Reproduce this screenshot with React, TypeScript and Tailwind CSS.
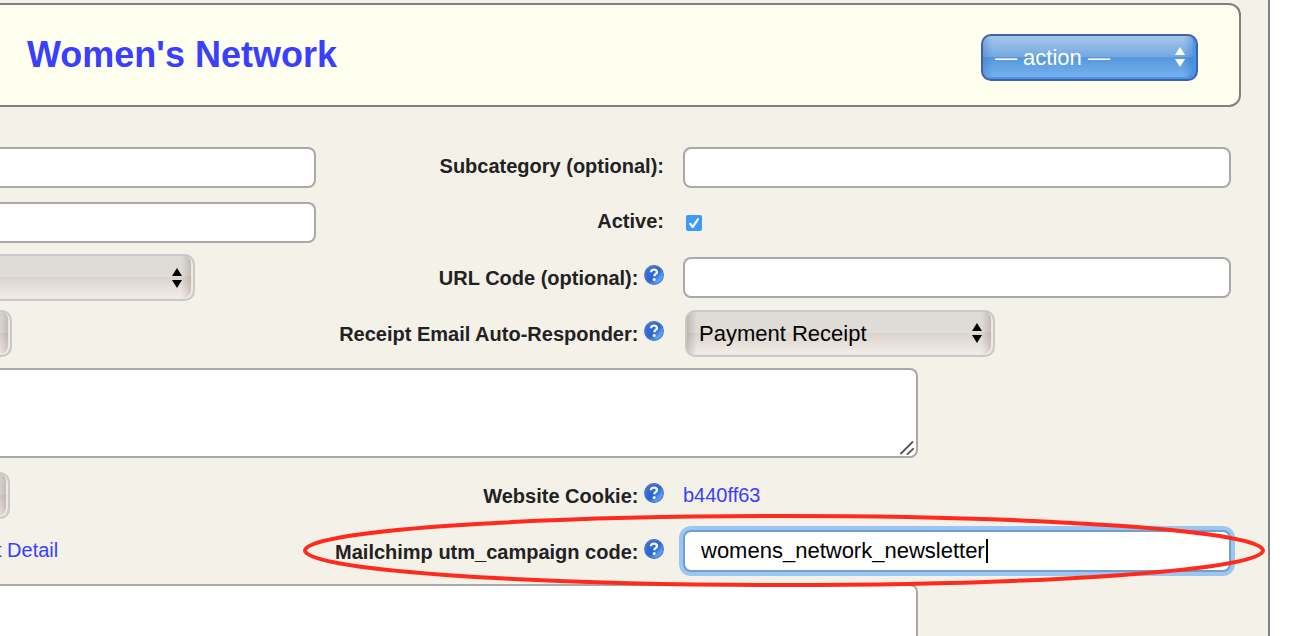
import { ReactNode } from 'react'
import clsx from 'clsx'

function HelpIcon() {
    return (
        <svg className="inline size-5 align-baseline" viewBox="0 0 20 20" role="img" aria-label="Help">
            <defs>
                <linearGradient id="help-fill" x1="0.1" y1="0.2" x2="0.9" y2="0.9">
                    <stop offset="0" stopColor="#3f70d4" />
                    <stop offset="0.5" stopColor="#2a62d2" />
                    <stop offset="1" stopColor="#74bcfb" />
                </linearGradient>
            </defs>
            <circle cx="10" cy="10" r="9.9" fill="#3163bd" />
            <circle cx="10" cy="10" r="9" fill="url(#help-fill)" stroke="#5c8ddd" strokeWidth="0.6" />
            <path d="M7 7.2C7.1 5.4 8.4 4.6 10 4.6c1.8 0 3 .8 3 2.3 0 2-2.7 2-2.7 4.4" fill="none" stroke="#f4f8ff" strokeWidth="2.4" />
            <circle cx="10.2" cy="14.4" r="1.5" fill="#f4f8ff" />
        </svg>
    )
}

function Arrows({ className }: { className?: string }) {
    return (
        <svg className={clsx('pointer-events-none absolute top-1/2 right-[13px] h-5 w-[10px] -translate-y-1/2', className)} viewBox="0 0 10 20" fill="currentColor" aria-hidden="true">
            <path d="M5 0 10 8H0zM5 20 10 12H0z" />
        </svg>
    )
}

const inputClass = 'block h-[41px] w-full border-2 border-[#a9a9a9] bg-white px-4 text-[22px] text-black outline-none'

const selectClass = 'block h-[47px] w-full appearance-none border-2 border-[#c9c9c9] text-[22px] text-black outline-none shadow-[inset_-2px_-1px_0_#f1e6e0]'

const bevelBoth =
    'bg-[linear-gradient(to_right,rgba(90,75,70,0.24),rgba(90,75,70,0)_10px,rgba(90,75,70,0)_calc(100%-12px),rgba(90,75,70,0.26)),linear-gradient(to_bottom,#dedbd6,#e0dcd7_49%,#dbd3ce_50%,#f3eee9)]'

const bevelRight =
    'bg-[linear-gradient(to_right,rgba(90,75,70,0)_calc(100%-12px),rgba(90,75,70,0.26)),linear-gradient(to_bottom,#dedbd6,#e0dcd7_49%,#dbd3ce_50%,#f3eee9)]'

function Row({ left, label, htmlFor, help, children, className }: { left?: ReactNode; label: string; htmlFor?: string; help?: boolean; children: ReactNode; className?: string }) {
    return (
        <div className={clsx('relative grid grid-cols-[316px_348px_1fr] items-center', className)}>
            <div>{left}</div>
            <div className={clsx('text-right text-xl leading-6 font-bold whitespace-nowrap text-[#222]', !help && 'pb-[3px]')}>
                {htmlFor ? <label htmlFor={htmlFor}>{label}</label> : <span>{label}</span>}
                {help && <> <HelpIcon /></>}
            </div>
            <div className="pr-[37px] pl-[19px]">{children}</div>
        </div>
    )
}

export default function App() {
    return (
        <div className="h-screen overflow-hidden bg-white font-['Liberation_Sans',Arial,sans-serif]">
            <main className="mr-[34px] h-full overflow-hidden border-r-2 border-[#808080] bg-[#f4f1e9] pt-[3px]">
                <header className="mr-[27px] flex h-[104px] items-center justify-between rounded-r-xl border-2 border-l-0 border-[#808080] bg-[#fffff0] pt-1 pr-[41px] pl-[27px]">
                    <h1 className="pb-1 text-4xl font-bold text-[#3a3fff]">Women's Network</h1>
                    <div className="relative w-[217px]">
                        <select
                            aria-label="Action"
                            className="block h-[47px] w-full appearance-none rounded-[10px] border-2 border-[#4660a4] bg-[linear-gradient(to_right,rgba(40,110,190,0.3),rgba(40,110,190,0)_10px,rgba(40,110,190,0)_calc(100%-13px),rgba(40,110,190,0.45)),linear-gradient(to_bottom,#a8c8ea,#72a8e0_49%,#5598de_50%,#7ab2ee)] px-3 text-[22px] text-white shadow-[inset_-3px_-2px_0_#4495ee] outline-none"
                        >
                            <option>— action —</option>
                        </select>
                        <Arrows className="text-white" />
                    </div>
                </header>

                <form className="pt-[33px]">
                    <Row className="h-[55px]" label="Subcategory (optional):" htmlFor="subcategory" left={<input aria-label="Name" className={clsx(inputClass, 'rounded-r-lg border-l-0')} />}>
                        <input id="subcategory" className={clsx(inputClass, 'rounded-lg')} />
                    </Row>
                    <Row className="h-[55px]" label="Active:" htmlFor="active" left={<input aria-label="Category" className={clsx(inputClass, 'rounded-r-lg border-l-0')} />}>
                        <div className="relative ml-[3px] size-4">
                            <input id="active" type="checkbox" defaultChecked className="block size-4 appearance-none rounded-xs bg-[#3f99fb]" />
                            <svg className="pointer-events-none absolute inset-0 size-4" viewBox="0 0 16 16" fill="none" stroke="#fff" strokeWidth="2.2" strokeLinecap="round" strokeLinejoin="round" aria-hidden="true">
                                <path d="M4.2 8.8 6.8 12 12 4.2" />
                            </svg>
                        </div>
                    </Row>
                    <Row
                        className="h-[55px]"
                        label="URL Code (optional):"
                        htmlFor="url-code"
                        help
                        left={
                            <div className="relative w-[195px]">
                                <select aria-label="Type" className={clsx(selectClass, bevelRight, 'rounded-r-[10px] border-l-0')} />
                                <Arrows className="text-black" />
                            </div>
                        }
                    >
                        <input id="url-code" className={clsx(inputClass, 'rounded-lg')} />
                    </Row>
                    <Row
                        className="h-14"
                        label="Receipt Email Auto-Responder:"
                        htmlFor="receipt"
                        help
                        left={
                            <div className="w-3">
                                <select aria-label="Template" className={clsx(selectClass, bevelRight, 'rounded-r-[10px] border-l-0')} />
                            </div>
                        }
                    >
                        <div className="relative ml-0.5 w-[310px]">
                            <select id="receipt" className={clsx(selectClass, bevelBoth, 'rounded-[10px] px-3')}>
                                <option>Payment Receipt</option>
                            </select>
                            <Arrows className="text-black" />
                        </div>
                    </Row>

                    <div className="relative mt-[7px] mr-[350px] mb-[10px]">
                        <textarea aria-label="Description" className="block h-[90px] w-full resize-none rounded-r-lg border-2 border-l-0 border-[#a9a9a9] bg-white p-2 text-[22px] outline-none" />
                        <svg className="pointer-events-none absolute right-1 bottom-[3px] size-[14px]" viewBox="0 0 14 14" stroke="#555" strokeWidth="1.8" strokeLinecap="round" aria-hidden="true">
                            <path d="M1 12.5 12.5 1M7.5 13.2 13.2 7.8" />
                        </svg>
                    </div>

                    <Row
                        className="h-[55px]"
                        label="Website Cookie:"
                        help
                        left={
                            <div className="w-2.5">
                                <select aria-label="Status" className={clsx(selectClass, bevelRight, 'rounded-r-[10px] border-l-0')} />
                            </div>
                        }
                    >
                        <a href="#" className="text-xl leading-6 text-[#3a3fff]">
                            b440ff63
                        </a>
                    </Row>
                    <Row
                        className="h-14"
                        label="Mailchimp utm_campaign code:"
                        htmlFor="utm"
                        help
                        left={
                            <a href="#" className="-ml-1 text-xl leading-6 text-[#3a3fff]">
                                t Detail
                            </a>
                        }
                    >
                        <div className="relative">
                            <input
                                id="utm"
                                defaultValue="womens_network_newsletter"
                                className="block h-[42px] w-full rounded-lg border-2 border-[#709fd0] bg-white px-4 text-[22px] text-black ring-4 ring-[#9cc6f1] outline-none"
                            />
                            {/* text cursor */}
                            <span className="absolute top-[9px] left-[303px] h-6 w-0.5 bg-black" />
                        </div>
                        {/* red highlight around the row */}
                        <div className="pointer-events-none absolute -top-[7px] right-[5px] left-[305px] z-10 h-[69px]">
                            <svg className="block h-full w-full overflow-visible" aria-hidden="true">
                                <ellipse cx="50%" cy="50%" rx="50%" ry="50%" fill="none" stroke="#ff2a1c" strokeWidth="4" />
                            </svg>
                        </div>
                    </Row>

                    <div className="mt-[5px] mr-[350px]">
                        <textarea aria-label="Notes" className="block h-[90px] w-full resize-none rounded-r-lg border-2 border-l-0 border-[#a9a9a9] bg-white p-2 text-[22px] outline-none" />
                    </div>
                </form>
            </main>
        </div>
    )
}
